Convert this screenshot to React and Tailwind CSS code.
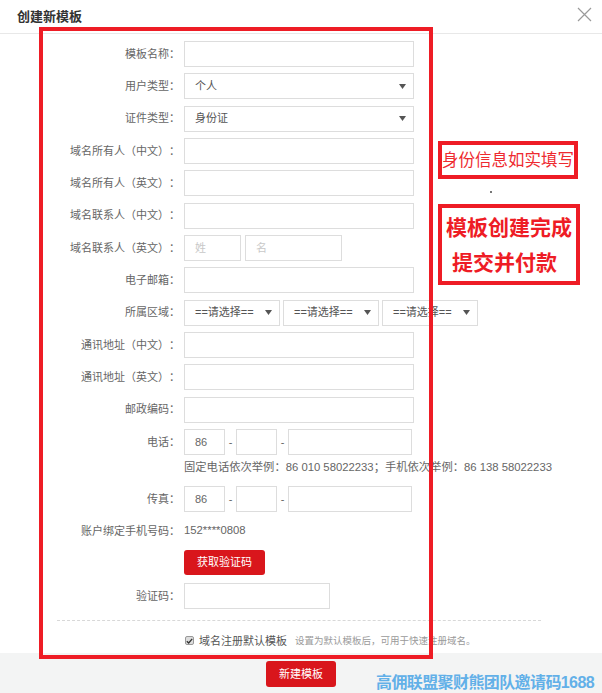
import React from "react";

function Row({ label, children }) {
  return (
    <div className="flex h-[26px] items-center">
      <div className="w-[180px] whitespace-nowrap text-right text-[11px] text-[#666]">{label}</div>
      <div className="ml-[4px] flex items-center">{children}</div>
    </div>
  );
}

function Box({ w, children, muted }) {
  return (
    <div
      className={`flex h-[26px] ${w} items-center border border-[#ddd] bg-white pl-[10px] text-[11px] ${
        muted ? "text-[#c8c8c8]" : "text-[#666]"
      }`}
    >
      {children}
    </div>
  );
}

function Select({ w, text }) {
  return (
    <div
      className={`flex h-[26px] ${w} items-center justify-between border border-[#ddd] bg-white pl-[10px] pr-[7px] text-[11px] text-[#555]`}
    >
      <span>{text}</span>
      <svg width="7" height="5" viewBox="0 0 7 5">
        <path d="M0 0h7L3.5 5z" fill="#555" />
      </svg>
    </div>
  );
}

function PhoneInputs() {
  return (
    <div className="flex items-center">
      <Box w="w-[41px]">86</Box>
      <span className="w-[11px] text-center text-[11px] text-[#666]">-</span>
      <Box w="w-[41px]" />
      <span className="w-[11px] text-center text-[11px] text-[#666]">-</span>
      <Box w="w-[124px]" />
    </div>
  );
}

export default function App() {
  return (
    <div className="relative h-[693px] w-[602px] overflow-hidden bg-white font-['Liberation_Sans','Noto_Sans_CJK_SC',sans-serif] [text-spacing-trim:space-all]">
      {/* header */}
      <div className="flex h-[34px] items-center justify-between border-b border-[#e8e8e8] pl-[17px] pr-[10px]">
        <div className="text-[13px] font-bold text-[#333]">创建新模板</div>
        <svg width="15" height="15" viewBox="0 0 15 15" className="mt-[-4px]">
          <path d="M1 1L14 14M14 1L1 14" stroke="#9a9a9a" strokeWidth="1.2" />
        </svg>
      </div>

      {/* body */}
      <div className="pt-[7px]">
        <div className="flex flex-col gap-[6.33px]">
          <Row label="模板名称：">
            <Box w="w-[230px]" />
          </Row>
          <Row label="用户类型：">
            <Select w="w-[230px]" text="个人" />
          </Row>
          <Row label="证件类型：">
            <Select w="w-[230px]" text="身份证" />
          </Row>
          <Row label="域名所有人（中文）：">
            <Box w="w-[230px]" />
          </Row>
          <Row label="域名所有人（英文）：">
            <Box w="w-[230px]" />
          </Row>
          <Row label="域名联系人（中文）：">
            <Box w="w-[230px]" />
          </Row>
          <Row label="域名联系人（英文）：">
            <div className="flex gap-[4px]">
              <Box w="w-[57px]" muted>
                姓
              </Box>
              <Box w="w-[97px]" muted>
                名
              </Box>
            </div>
          </Row>
          <Row label="电子邮箱：">
            <Box w="w-[230px]" />
          </Row>
          <Row label="所属区域：">
            <div className="flex gap-[3px]">
              <Select w="w-[96px]" text="==请选择==" />
              <Select w="w-[96px]" text="==请选择==" />
              <Select w="w-[96px]" text="==请选择==" />
            </div>
          </Row>
          <Row label="通讯地址（中文）：">
            <Box w="w-[230px]" />
          </Row>
          <Row label="通讯地址（英文）：">
            <Box w="w-[230px]" />
          </Row>
          <Row label="邮政编码：">
            <Box w="w-[230px]" />
          </Row>
          <Row label="电话：">
            <PhoneInputs />
          </Row>
        </div>

        <div className="ml-[184px] mt-[4px] h-[16px] whitespace-nowrap text-[11.3px] leading-[16px] text-[#666]">
          固定电话依次举例：86 010 58022233；手机依次举例：86 138 58022233
        </div>

        <div className="mt-[11px]">
          <Row label="传真：">
            <PhoneInputs />
          </Row>
        </div>

        <div className="mt-[6px]">
          <Row label="账户绑定手机号码：">
            <span className="text-[11.3px] text-[#666]">152****0808</span>
          </Row>
        </div>

        <div className="ml-[184px] mt-[6px] flex h-[25px] w-[81px] items-center justify-center rounded-[3px] bg-[#d9161c] text-[11px] text-white">
          获取验证码
        </div>

        <div className="mt-[8px]">
          <Row label="验证码：">
            <Box w="w-[146px]" />
          </Row>
        </div>

        <div className="ml-[57px] mt-[11px] w-[484px] border-t border-dashed border-[#d8d8d8]" />

        <div className="ml-[185px] mt-[13px] flex h-[14px] items-center whitespace-nowrap">
          <span className="flex h-[9px] w-[9px] items-center justify-center rounded-[2px] border border-[#999] bg-[#ddd]">
            <svg width="7" height="6" viewBox="0 0 7 6">
              <path d="M0.8 3.2L2.7 5L6.2 0.8" stroke="#333" strokeWidth="1.3" fill="none" />
            </svg>
          </span>
          <span className="ml-[5px] text-[11px] text-[#555]">域名注册默认模板</span>
          <span className="ml-[8px] text-[9.5px] text-[#9a9a9a]">设置为默认模板后，可用于快速注册域名。</span>
        </div>
      </div>

      {/* footer */}
      <div className="mt-[5px] flex h-[41px] justify-center bg-[#f3f4f4] pt-[8px]">
        <div className="flex h-[26px] w-[70px] items-center justify-center rounded-[3px] bg-[#d9161c] text-[11px] text-white">
          新建模板
        </div>
      </div>

      {/* annotations */}
      <div className="pointer-events-none absolute left-[39px] top-[27px] h-[632px] w-[394px] border-[4px] border-[#ee1c25]" />

      <div className="absolute left-[438px] top-[141px] flex h-[38px] w-[140px] items-center justify-center border-[4px] border-[#ee1c25] text-[16.5px] text-[#ee2a30]">
        身份信息如实填写
      </div>

      <div className="absolute left-[490px] top-[191px] h-[2px] w-[2px] bg-[#777]" />

      <div className="absolute left-[438px] top-[204px] flex h-[81px] w-[142px] flex-col items-center justify-center border-[4px] border-[#ee1c25] text-[21px] font-bold leading-[35px] text-[#ee1c25]">
        <div>模板创建完成</div>
        <div className="pr-[9px]">提交并付款</div>
      </div>

      <div className="absolute left-[376px] top-[673px] whitespace-nowrap text-[16px] font-bold leading-[20px] tracking-[-0.6px] text-[#62b0e8]">
        高佣联盟聚财熊团队邀请码1688
      </div>
    </div>
  );
}
